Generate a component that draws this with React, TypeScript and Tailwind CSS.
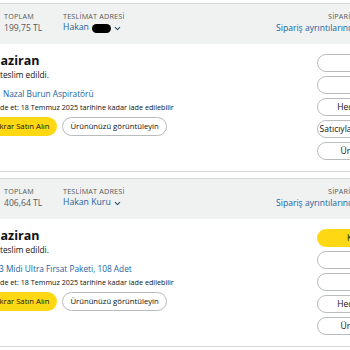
import { ChevronDown } from 'lucide-react';

type Order = {
  total: string;
  name: React.ReactNode;
  product: React.ReactNode;
  pills: { label: string; primary?: boolean }[];
};

const orders: Order[] = [
  {
    total: '199,75 TL',
    name: (
      <>
        Hakan
        <span className="ml-[3px] inline-block h-[9px] w-[19px] rounded-[5px] bg-black" />
      </>
    ),
    product: <span className="ml-[3px]">Nazal Burun Aspiratörü</span>,
    pills: [
      { label: 'Destek al' },
      { label: 'İade et' },
      { label: 'Hediye makbuzu paylaş' },
      { label: 'Satıcıyla ilgili geri bildirim bırakın' },
      { label: 'Ürün incelemesi yazın' },
    ],
  },
  {
    total: '406,64 TL',
    name: 'Hakan Kuru',
    product: <span className="-ml-[1px]">3 Midi Ultra Fırsat Paketi, 108 Adet</span>,
    pills: [
      { label: 'Kargoyu takip edin', primary: true },
      { label: 'Destek al' },
      { label: 'İade et' },
      { label: 'Hediye makbuzu paylaş' },
      { label: 'Ürün incelemesi yazın' },
    ],
  },
];

export default function App() {
  return (
    <div
      className="h-[350px] w-[350px] overflow-hidden bg-white pt-[3px] text-[#0f1111]"
      style={{ fontFamily: '"Open Sans", "Noto Sans", sans-serif' }}
    >
      <div className="flex w-[464px] flex-col gap-[6px]">
        {orders.map((o, i) => (
          <OrderCard key={i} order={o} />
        ))}
      </div>
    </div>
  );
}

function OrderCard({ order }: { order: Order }) {
  return (
    <section className="border-y border-[#d5d9d9]">
      <header className="flex h-[40px] items-start bg-[#f0f2f2] pl-[4px] pt-[7px] text-[#565959]">
        <div className="w-[59px] shrink-0">
          <div className="text-[7.2px] leading-[10px] tracking-[0.2px]">TOPLAM</div>
          <div className="text-[8.6px] leading-[14px]">{order.total}</div>
        </div>
        <div className="w-[213px] shrink-0">
          <div className="text-[7.2px] leading-[10px] tracking-[0.2px]">TESLİMAT ADRESİ</div>
          <div className="flex h-[14px] items-center text-[8.7px] text-[#2162a1]">
            {order.name}
            <ChevronDown size={9} strokeWidth={2.75} className="ml-[2px] text-[#2a4a6b]" />
          </div>
        </div>
        <div className="shrink-0">
          <div className="pl-[52px] text-[7.2px] leading-[10px] tracking-[0.2px]">
            SİPARİŞ # 403-5412873-1204316
          </div>
          <div className="text-[8.6px] leading-[14px] text-[#2162a1]">
            Sipariş ayrıntılarını görüntüleyin
          </div>
        </div>
      </header>

      <div className="flex pb-[11px]">
        <div className="min-w-0 flex-1 pt-[9px]">
          <h2 className="-ml-[9px] text-[12.5px] font-bold leading-[16px]">Haziran</h2>
          <p className="text-[8.3px] leading-[12px]">teslim edildi.</p>
          <p className="mt-[7px] whitespace-nowrap text-[8.3px] leading-[12px] text-[#2162a1]">
            {order.product}
          </p>
          <p className="-ml-[6px] mt-[2px] whitespace-nowrap text-[7.2px] leading-[11px]">
            İade et: 18 Temmuz 2025 tarihine kadar iade edilebilir
          </p>
          <div className="mt-[4px] flex gap-[5px]">
            <button className="-ml-[21px] h-[19px] whitespace-nowrap rounded-full bg-[#ffd814] pl-[12px] pr-[8px] text-[7.7px]">
              Tekrar Satın Alın
            </button>
            <button className="h-[19px] whitespace-nowrap rounded-full border border-[#b9bcbc] px-[7px] text-[7.7px]">
              Ürününüzü görüntüleyin
            </button>
          </div>
        </div>
        <div className="flex w-[147px] shrink-0 flex-col gap-[4px] pr-[13px] pt-[10px]">
          {order.pills.map((p) => (
            <button
              key={p.label}
              className={`h-[18px] whitespace-nowrap rounded-full text-center text-[8.5px] ${
                p.primary ? 'bg-[#ffd814]' : 'border border-[#b9bcbc]'
              }`}
            >
              {p.label}
            </button>
          ))}
        </div>
      </div>
    </section>
  );
}
